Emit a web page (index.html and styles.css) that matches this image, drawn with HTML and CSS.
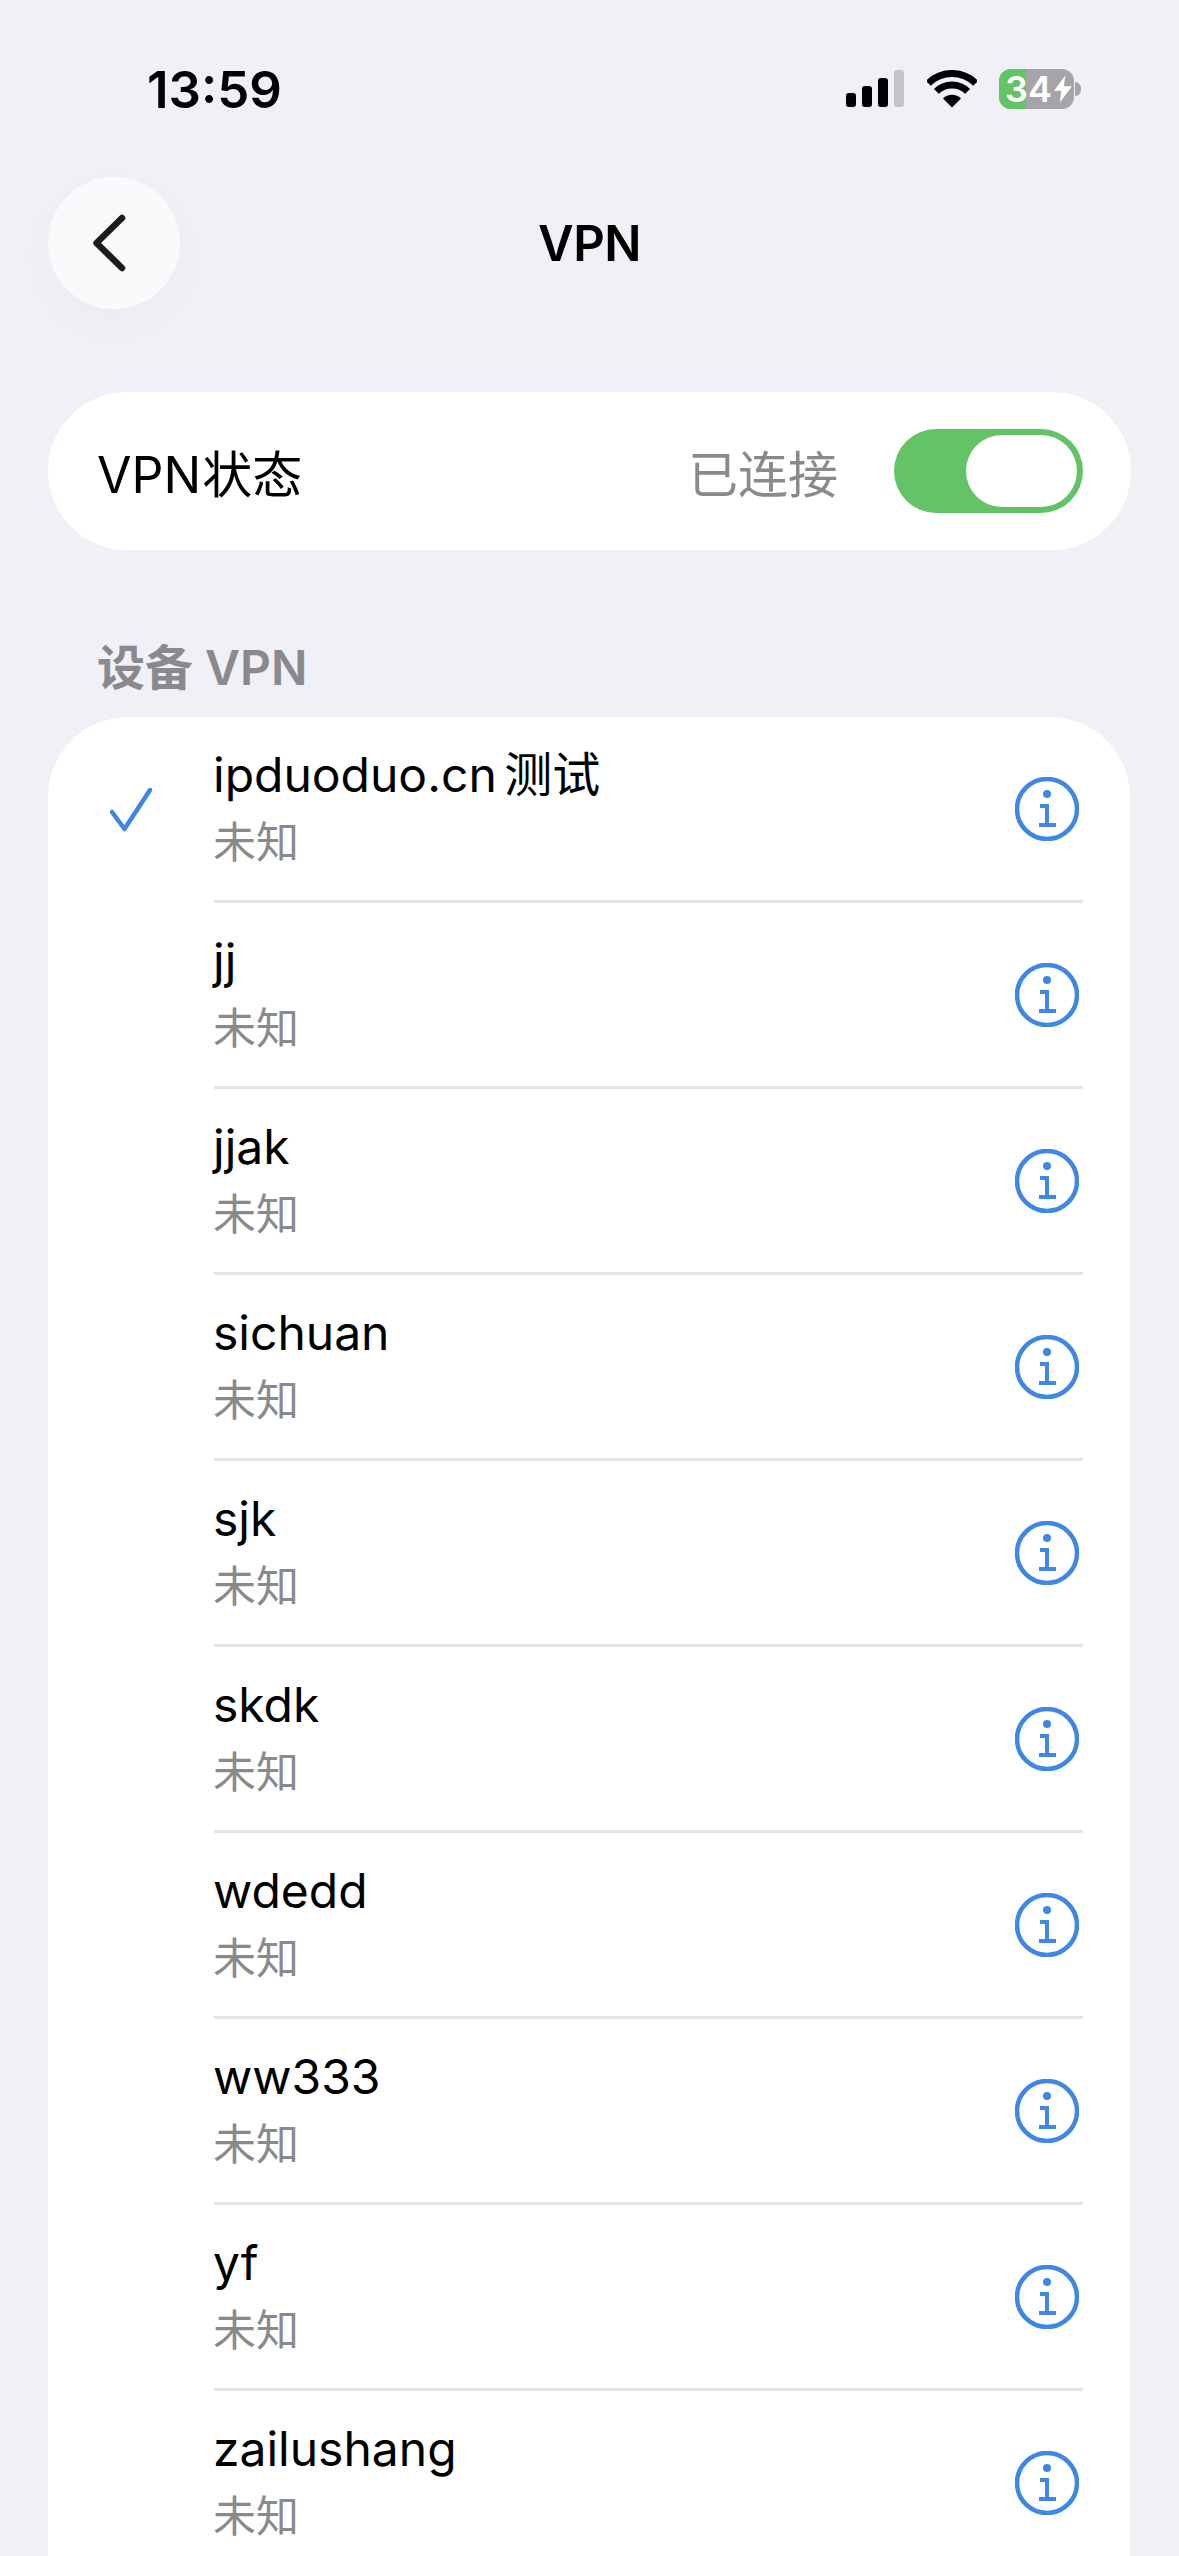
FILE: index.html
```html
<!DOCTYPE html>
<html lang="zh-CN">
<head>
    <meta charset="UTF-8">
    <meta name="viewport" content="width=device-width, initial-scale=1.0">
    <title>VPN</title>
    <link rel="stylesheet" href="styles.css">
</head>
<body>
    <div class="screen">
        <!-- Status bar -->
        <header class="status-bar">
            <span class="time">13:59</span>
            <div class="status-icons">
                <div class="signal">
                    <span class="bar bar-1"></span>
                    <span class="bar bar-2"></span>
                    <span class="bar bar-3"></span>
                    <span class="bar bar-4"></span>
                </div>
                <svg class="wifi" viewBox="0 0 50 38">
                    <path class="wifi-arc" d="M1.3 13.3A33.5 33.5 0 0 1 48.7 13.3"></path>
                    <path class="wifi-arc" d="M9.4 21.4A22 22 0 0 1 40.6 21.4"></path>
                    <path class="wifi-dot" d="M16 28.5A12.7 12.7 0 0 1 34 28.5L25 37.5Z"></path>
                </svg>
                <div class="battery">
                    <div class="battery-body">
                        <div class="battery-level"></div>
                        <div class="battery-label">
                            <span>34</span>
                            <svg class="bolt" viewBox="0 0 20 30">
                                <path d="M12.5 0L0 17H8L6.5 30L20 12H11Z"></path>
                            </svg>
                        </div>
                    </div>
                    <span class="battery-cap"></span>
                </div>
            </div>
        </header>

        <!-- Nav -->
        <nav class="nav">
            <button class="back-btn">
                <svg class="back-icon" viewBox="0 0 44 64">
                    <path d="M30 7L4.5 32L30 57"></path>
                </svg>
            </button>
            <h1 class="nav-title">VPN</h1>
        </nav>

        <!-- VPN state -->
        <section class="state-card">
            <span class="state-label">VPN 状态</span>
            <span class="state-value">已连接</span>
            <div class="toggle"><span class="toggle-knob"></span></div>
        </section>

        <h2 class="section-title">设备 VPN</h2>

        <!-- Devices -->
        <main class="vpn-list">
            <div class="vpn-row">
                <div class="check-col">
                    <svg class="check" viewBox="0 0 42 44">
                        <path d="M2 24L14.500 41L40 2"></path>
                    </svg>
                </div>
                <div class="vpn-body">
                    <div class="vpn-text">
                        <div class="vpn-name">ipduoduo.cn 测试</div>
                        <div class="vpn-type">未知</div>
                    </div>
                    <svg class="info" viewBox="0 0 64 64">
                        <circle class="info-ring" cx="32" cy="32" r="30"></circle>
                        <circle class="info-dot" cx="32" cy="17" r="4"></circle>
                        <path class="info-stem" d="M25 29H32V48M24 48H41"></path>
                    </svg>
                </div>
            </div>
            <div class="vpn-row">
                <div class="check-col"></div>
                <div class="vpn-body">
                    <div class="vpn-text">
                        <div class="vpn-name">jj</div>
                        <div class="vpn-type">未知</div>
                    </div>
                    <svg class="info" viewBox="0 0 64 64">
                        <circle class="info-ring" cx="32" cy="32" r="30"></circle>
                        <circle class="info-dot" cx="32" cy="17" r="4"></circle>
                        <path class="info-stem" d="M25 29H32V48M24 48H41"></path>
                    </svg>
                </div>
            </div>
            <div class="vpn-row">
                <div class="check-col"></div>
                <div class="vpn-body">
                    <div class="vpn-text">
                        <div class="vpn-name">jjak</div>
                        <div class="vpn-type">未知</div>
                    </div>
                    <svg class="info" viewBox="0 0 64 64">
                        <circle class="info-ring" cx="32" cy="32" r="30"></circle>
                        <circle class="info-dot" cx="32" cy="17" r="4"></circle>
                        <path class="info-stem" d="M25 29H32V48M24 48H41"></path>
                    </svg>
                </div>
            </div>
            <div class="vpn-row">
                <div class="check-col"></div>
                <div class="vpn-body">
                    <div class="vpn-text">
                        <div class="vpn-name">sichuan</div>
                        <div class="vpn-type">未知</div>
                    </div>
                    <svg class="info" viewBox="0 0 64 64">
                        <circle class="info-ring" cx="32" cy="32" r="30"></circle>
                        <circle class="info-dot" cx="32" cy="17" r="4"></circle>
                        <path class="info-stem" d="M25 29H32V48M24 48H41"></path>
                    </svg>
                </div>
            </div>
            <div class="vpn-row">
                <div class="check-col"></div>
                <div class="vpn-body">
                    <div class="vpn-text">
                        <div class="vpn-name">sjk</div>
                        <div class="vpn-type">未知</div>
                    </div>
                    <svg class="info" viewBox="0 0 64 64">
                        <circle class="info-ring" cx="32" cy="32" r="30"></circle>
                        <circle class="info-dot" cx="32" cy="17" r="4"></circle>
                        <path class="info-stem" d="M25 29H32V48M24 48H41"></path>
                    </svg>
                </div>
            </div>
            <div class="vpn-row">
                <div class="check-col"></div>
                <div class="vpn-body">
                    <div class="vpn-text">
                        <div class="vpn-name">skdk</div>
                        <div class="vpn-type">未知</div>
                    </div>
                    <svg class="info" viewBox="0 0 64 64">
                        <circle class="info-ring" cx="32" cy="32" r="30"></circle>
                        <circle class="info-dot" cx="32" cy="17" r="4"></circle>
                        <path class="info-stem" d="M25 29H32V48M24 48H41"></path>
                    </svg>
                </div>
            </div>
            <div class="vpn-row">
                <div class="check-col"></div>
                <div class="vpn-body">
                    <div class="vpn-text">
                        <div class="vpn-name">wdedd</div>
                        <div class="vpn-type">未知</div>
                    </div>
                    <svg class="info" viewBox="0 0 64 64">
                        <circle class="info-ring" cx="32" cy="32" r="30"></circle>
                        <circle class="info-dot" cx="32" cy="17" r="4"></circle>
                        <path class="info-stem" d="M25 29H32V48M24 48H41"></path>
                    </svg>
                </div>
            </div>
            <div class="vpn-row">
                <div class="check-col"></div>
                <div class="vpn-body">
                    <div class="vpn-text">
                        <div class="vpn-name">ww333</div>
                        <div class="vpn-type">未知</div>
                    </div>
                    <svg class="info" viewBox="0 0 64 64">
                        <circle class="info-ring" cx="32" cy="32" r="30"></circle>
                        <circle class="info-dot" cx="32" cy="17" r="4"></circle>
                        <path class="info-stem" d="M25 29H32V48M24 48H41"></path>
                    </svg>
                </div>
            </div>
            <div class="vpn-row">
                <div class="check-col"></div>
                <div class="vpn-body">
                    <div class="vpn-text">
                        <div class="vpn-name">yf</div>
                        <div class="vpn-type">未知</div>
                    </div>
                    <svg class="info" viewBox="0 0 64 64">
                        <circle class="info-ring" cx="32" cy="32" r="30"></circle>
                        <circle class="info-dot" cx="32" cy="17" r="4"></circle>
                        <path class="info-stem" d="M25 29H32V48M24 48H41"></path>
                    </svg>
                </div>
            </div>
            <div class="vpn-row">
                <div class="check-col"></div>
                <div class="vpn-body">
                    <div class="vpn-text">
                        <div class="vpn-name">zailushang</div>
                        <div class="vpn-type">未知</div>
                    </div>
                    <svg class="info" viewBox="0 0 64 64">
                        <circle class="info-ring" cx="32" cy="32" r="30"></circle>
                        <circle class="info-dot" cx="32" cy="17" r="4"></circle>
                        <path class="info-stem" d="M25 29H32V48M24 48H41"></path>
                    </svg>
                </div>
            </div>
        </main>
    </div>
</body>
</html>
```

FILE: styles.css
```css
/* styles.css */
* {
    box-sizing: border-box;
}

body {
    margin: 0;
    background: #f0f0f6;
    color: #000;
    font-family: "Inter", "Noto Sans CJK SC", sans-serif;
}

.screen {
    height: 2556px;
    overflow: hidden;
}

/* Status bar */
.status-bar {
    display: flex;
    justify-content: space-between;
    align-items: center;
    height: 177px;
    padding: 0 98px 0 147px;
}

.time {
    font-size: 51px;
    font-weight: 600;
    line-height: 60px;
    margin-top: 2px;
}

.status-icons {
    display: flex;
    align-items: center;
}

.signal {
    display: flex;
    align-items: flex-end;
    gap: 6px;
    height: 37px;
}

.bar {
    width: 10px;
    border-radius: 3px;
    background: #000;
}

.bar-1 { height: 14px; }
.bar-2 { height: 21px; }
.bar-3 { height: 29px; }
.bar-4 { height: 37px; background: #c4c4c8; }

.wifi {
    width: 50px;
    height: 38px;
    margin-left: 23px;
}

.wifi-arc {
    fill: none;
    stroke: #000;
    stroke-width: 7;
}

.wifi-dot {
    fill: #000;
}

.battery {
    display: flex;
    align-items: center;
    margin-left: 22px;
}

.battery-body {
    position: relative;
    width: 75px;
    height: 40px;
    border-radius: 12px;
    background: #a4a4a9;
}

.battery-level {
    width: 27px;
    height: 100%;
    border-radius: 12px 0 0 12px;
    background: #62c466;
}

.battery-label {
    position: absolute;
    inset: 0;
    display: flex;
    align-items: center;
    padding-left: 6px;
    gap: 2px;
    color: #fff;
    font-size: 36px;
    font-weight: 600;
    line-height: 36px;
}

.bolt {
    width: 18px;
    height: 28px;
    fill: #fff;
}

.battery-cap {
    width: 6px;
    height: 14px;
    margin-left: 1px;
    border-radius: 0 6px 6px 0;
    background: #a4a4a9;
}

/* Nav */
.nav {
    display: grid;
    grid-template-columns: 132px 1fr 132px;
    align-items: center;
    padding: 0 48px;
}

.back-btn {
    display: flex;
    align-items: center;
    justify-content: center;
    width: 132px;
    height: 132px;
    padding: 0;
    border: none;
    border-radius: 50%;
    background: #fafafc;
    box-shadow: 0 14px 50px rgba(0, 0, 0, 0.025);
}

.back-icon {
    width: 44px;
    height: 64px;
    fill: none;
    stroke: #1c1c1e;
    stroke-width: 6.500;
    stroke-linecap: round;
    stroke-linejoin: round;
}

.nav-title {
    margin: 2px 0 0;
    font-size: 49px;
    font-weight: 600;
    letter-spacing: -0.5px;
    line-height: 60px;
    text-align: center;
}

/* VPN state */
.state-card {
    display: flex;
    align-items: center;
    height: 158px;
    margin: 83px 48px 0;
    padding: 0 48px 0 49px;
    border-radius: 79px;
    background: #fff;
}

.state-label {
    flex: 1;
    font-size: 50px;
    word-spacing: -13px;
}

.state-value {
    margin-right: 56px;
    font-size: 50px;
    color: #8a8a8e;
}

.toggle {
    display: flex;
    align-items: center;
    justify-content: flex-end;
    width: 189px;
    height: 84px;
    padding-right: 6px;
    border-radius: 42px;
    background: #62c466;
}

.toggle-knob {
    width: 111px;
    height: 72px;
    border-radius: 36px;
    background: #fff;
}

.section-title {
    height: 167px;
    margin: 0;
    padding: 90px 0 0 97px;
    color: #8a8a8e;
    font-size: 48px;
    font-weight: 600;
    line-height: 56px;
}

/* Device list */
.vpn-list {
    margin: 0 49px 0 48px;
    border-radius: 80px 80px 0 0;
    background: #fff;
}

.vpn-row {
    display: flex;
    height: 186px;
}

.check-col {
    display: flex;
    align-items: center;
    justify-content: center;
    width: 166px;
}

.check {
    width: 42px;
    height: 44px;
    fill: none;
    stroke: #3f86e6;
    stroke-width: 4.500;
    stroke-linecap: round;
    stroke-linejoin: round;
}

.vpn-body {
    display: flex;
    flex: 1;
    align-items: center;
    justify-content: space-between;
    margin-right: 47px;
    padding-right: 4px;
    border-bottom: 3px solid #e5e5e7;
}

.vpn-text {
    padding-bottom: 7px;
}

.vpn-name {
    margin-left: -1px;
    font-size: 48px;
    line-height: 62px;
    word-spacing: -6px;
}

.vpn-type {
    margin: 11px 0 0 -1px;
    color: #8a8a8e;
    font-size: 43px;
    line-height: 50px;
}

.info {
    flex: none;
    width: 64px;
    height: 64px;
}

.info-ring {
    fill: none;
    stroke: #3f86e6;
    stroke-width: 4.500;
}

.info-dot {
    fill: #3f86e6;
}

.info-stem {
    fill: none;
    stroke: #3f86e6;
    stroke-width: 4;
}
```
